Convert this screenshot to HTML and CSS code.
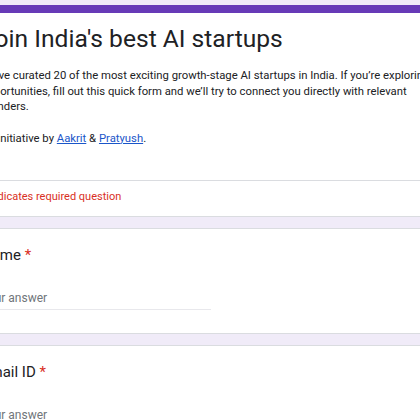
FILE: index.html
```html
<!DOCTYPE html>
<html lang="en">
<head>
<meta charset="utf-8">
<title>Join India's best AI startups</title>
<link rel="stylesheet" href="styles.css">
</head>
<body>
<main class="form">
  <section class="card header-card">
    <div class="header-accent"></div>
    <div class="header-body">
      <h1 class="title">Join India's best AI startups</h1>
      <div class="desc">
        <p class="desc-line">We’ve curated 20 of the most exciting growth-stage AI startups in India. If you’re exploring opportunities, fill out this quick form and we’ll try to connect you directly with relevant founders.</p>
        <p class="desc-line desc-gap">An initiative by <a class="link" href="#">Aakrit</a> &amp; <a class="link" href="#">Pratyush</a>.</p>
      </div>
    </div>
    <div class="required-note">* Indicates required question</div>
  </section>

  <section class="card question">
    <div class="q-title">Name <span class="req">*</span></div>
    <div class="answer">Your answer</div>
  </section>

  <section class="card question">
    <div class="q-title">Email ID <span class="req">*</span></div>
    <div class="answer">Your answer</div>
  </section>
</main>
</body>
</html>
```

FILE: styles.css
```css
html, body {
  margin: 0;
  padding: 0;
  height: 100%;
  overflow: hidden;
  background: #f0ebf8;
}

.form {
  width: 491px;
  margin-left: -38px;
  padding-top: 5px;
  display: flex;
  flex-direction: column;
  gap: 11px;
  font-family: Roboto, "Liberation Sans", Arial, sans-serif;
  color: #202124;
}

.card {
  background: #ffffff;
  border: 1px solid #dadce0;
  border-radius: 8px;
}

.header-card {
  border-top: 0;
  overflow: hidden;
}

.header-accent {
  height: 8px;
  background: #673ab7;
}

.header-body {
  padding: 10px 18px 34px;
}

.title {
  margin: 0;
  font-size: 24.6px;
  line-height: 32px;
  font-weight: 400;
}

.desc {
  margin-top: 13px;
}

.desc-line {
  margin: 0;
  font-size: 11.3px;
  line-height: 15.5px;
}

.desc-gap {
  margin-top: 16px;
}

.link {
  color: #1a56c9;
  text-decoration: underline;
}

.required-note {
  border-top: 1px solid #dadce0;
  padding: 8px 18px 12px;
  font-size: 11px;
  line-height: 15px;
  color: #d93025;
}

.question {
  padding: 16px 18px 23px;
}

.q-title {
  font-size: 15px;
  line-height: 20px;
}

.req {
  color: #d93025;
}

.answer {
  width: 230px;
  margin-top: 25px;
  padding-bottom: 3px;
  border-bottom: 1px solid #e8e8ec;
  font-size: 12px;
  line-height: 16px;
  color: #70757a;
}
```
